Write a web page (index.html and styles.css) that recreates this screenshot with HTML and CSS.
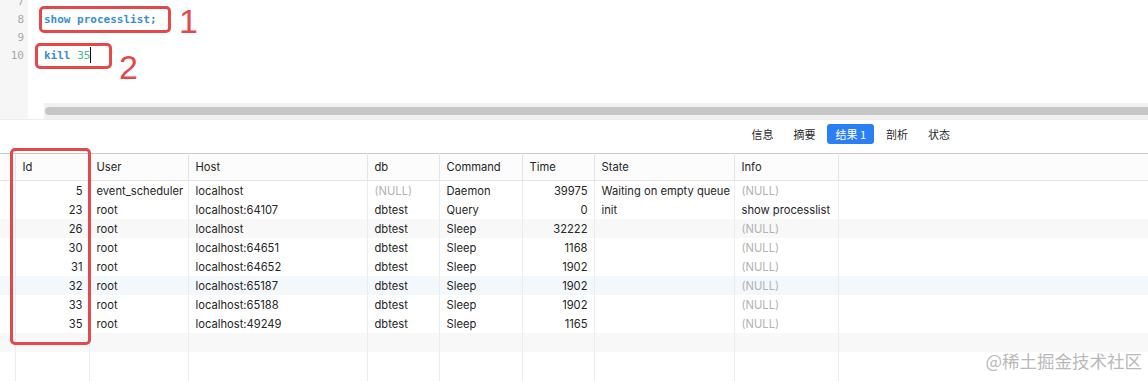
FILE: index.html
```html
<!DOCTYPE html>
<html lang="zh-CN">
<head>
  <meta charset="UTF-8" />
  <title>show processlist</title>
  <link rel="stylesheet" href="styles.css">
</head>
<body>
  <div class="page">
    <div class="editor">
      <div class="gutter">
        <div class="ln">7</div>
        <div class="ln">8</div>
        <div class="ln">9</div>
        <div class="ln">10</div>
      </div>
      <div class="code">
        <div class="lines">
          <div class="line"></div>
          <div class="line"><span class="kw">show processlist;</span></div>
          <div class="line"></div>
          <div class="line"><span class="kw">kill</span> <span class="num">35</span><span class="caret"></span></div>
        </div>
        <div class="hscroll"><div class="thumb"></div></div>
      </div>
    </div>

    <div class="tabs">
      <span class="tab">信息</span>
      <span class="tab">摘要</span>
      <span class="tab active">结果 1</span>
      <span class="tab">剖析</span>
      <span class="tab">状态</span>
    </div>

    <table class="grid">
      <colgroup>
        <col style="width: 15px">
        <col style="width: 74px">
        <col style="width: 99px">
        <col style="width: 179px">
        <col style="width: 72px">
        <col style="width: 83px">
        <col style="width: 72px">
        <col style="width: 140px">
        <col style="width: 104px">
        <col>
      </colgroup>
      <thead>
        <tr>
          <th class="pad"></th><th>Id</th><th>User</th><th>Host</th><th>db</th><th>Command</th><th>Time</th><th>State</th><th>Info</th><th class="rest"></th>
        </tr>
      </thead>
      <tbody>
        <tr><td class="pad"></td><td class="r">5</td><td>event_scheduler</td><td>localhost</td><td class="null">(NULL)</td><td>Daemon</td><td class="r">39975</td><td>Waiting on empty queue</td><td class="null">(NULL)</td><td class="rest"></td></tr>
        <tr><td class="pad"></td><td class="r">23</td><td>root</td><td>localhost:64107</td><td>dbtest</td><td>Query</td><td class="r">0</td><td>init</td><td>show processlist</td><td class="rest"></td></tr>
        <tr class="shade"><td class="pad"></td><td class="r">26</td><td>root</td><td>localhost</td><td>dbtest</td><td>Sleep</td><td class="r">32222</td><td></td><td class="null">(NULL)</td><td class="rest"></td></tr>
        <tr><td class="pad"></td><td class="r">30</td><td>root</td><td>localhost:64651</td><td>dbtest</td><td>Sleep</td><td class="r">1168</td><td></td><td class="null">(NULL)</td><td class="rest"></td></tr>
        <tr><td class="pad"></td><td class="r">31</td><td>root</td><td>localhost:64652</td><td>dbtest</td><td>Sleep</td><td class="r">1902</td><td></td><td class="null">(NULL)</td><td class="rest"></td></tr>
        <tr class="blue"><td class="pad"></td><td class="r">32</td><td>root</td><td>localhost:65187</td><td>dbtest</td><td>Sleep</td><td class="r">1902</td><td></td><td class="null">(NULL)</td><td class="rest"></td></tr>
        <tr><td class="pad"></td><td class="r">33</td><td>root</td><td>localhost:65188</td><td>dbtest</td><td>Sleep</td><td class="r">1902</td><td></td><td class="null">(NULL)</td><td class="rest"></td></tr>
        <tr><td class="pad"></td><td class="r">35</td><td>root</td><td>localhost:49249</td><td>dbtest</td><td>Sleep</td><td class="r">1165</td><td></td><td class="null">(NULL)</td><td class="rest"></td></tr>
        <tr class="shade"><td class="pad"></td><td></td><td></td><td></td><td></td><td></td><td></td><td></td><td></td><td class="rest"></td></tr>
        <tr class="filler"><td class="pad"></td><td></td><td></td><td></td><td></td><td></td><td></td><td></td><td></td><td class="rest"></td></tr>
      </tbody>
    </table>

    <!-- annotations drawn over the screenshot -->
    <div class="mark box1"></div>
    <div class="mark box2"></div>
    <div class="mark box3"></div>
    <span class="label label1">1</span>
    <span class="label label2">2</span>
    <span class="watermark">@稀土掘金技术社区</span>
  </div>
</body>
</html>
```

FILE: styles.css
```css
html, body {
  margin: 0;
  padding: 0;
  background: #fff;
}

body {
  font-family: Inter, "Liberation Sans", "Noto Sans CJK SC", sans-serif;
  color: #262626;
  overflow: hidden;
}

.page {
  position: relative;
  width: 1148px;
  height: 381px;
  overflow: hidden;
}

/* editor */
.editor {
  display: flex;
  height: 119px;
  border-bottom: 1px solid #ececec;
}

.gutter {
  width: 28px;
  background: #f6f6f6;
  margin-top: -7px;
  font-family: "DejaVu Sans Mono", monospace;
  font-size: 11px;
  color: #a8a8a8;
}

.ln {
  height: 18px;
  line-height: 18px;
  text-align: right;
  padding-right: 4px;
}

.code {
  flex: 1;
  display: flex;
  flex-direction: column;
  justify-content: space-between;
}

.lines {
  margin-top: -7px;
  padding-left: 16px;
  font-family: "DejaVu Sans Mono", monospace;
  font-size: 11px;
  font-weight: bold;
}

.line {
  height: 18px;
  line-height: 18px;
  white-space: pre;
}

.kw {
  color: #3a8ed6;
}

.num {
  color: #4dba8c;
  font-weight: normal;
}

.caret {
  display: inline-block;
  width: 1px;
  height: 16px;
  background: #111;
  vertical-align: -4px;
}

.hscroll {
  margin-left: 16px;
  height: 16px;
  background: #f1f1f1;
  display: flex;
  align-items: center;
}

.thumb {
  height: 8px;
  width: 100%;
  margin-left: 1px;
  background: #c6c6c6;
  border-radius: 4px 0 0 4px;
}

/* result tabs */
.tabs {
  display: flex;
  justify-content: flex-end;
  align-items: center;
  gap: 4px;
  height: 28px;
  padding-right: 190px;
  padding-bottom: 5px;
  font-size: 11px;
  color: #2a2a2a;
}

.tab {
  padding: 0 8px;
  height: 20px;
  line-height: 20px;
  border-radius: 3px;
  font-family: "Noto Sans CJK SC", sans-serif;
}

.tab.active {
  background: #2b7ff5;
  color: #fff;
}

/* result grid */
.grid {
  border-collapse: collapse;
  table-layout: fixed;
  width: 1148px;
  font-size: 11.2px;
  border-top: 1px solid #c9c9c9;
}

.grid th {
  height: 26px;
  background: #fcfcfc;
  font-weight: normal;
  text-align: left;
  padding: 0 7px;
  border-left: 1px solid #e4e4e4;
  border-bottom: 1px solid #e4e4e4;
  white-space: nowrap;
}

.grid td {
  height: 19px;
  padding: 0 7px;
  border-left: 1px solid #ececec;
  white-space: nowrap;
  overflow: hidden;
}

.grid .pad {
  border-left: none;
  padding: 0;
}

.grid .r {
  text-align: right;
  padding-right: 6px;
}

.grid .null {
  color: #b2b2b2;
}

.grid tr.shade td {
  background: #f8f8f8;
}

.grid tr.blue td {
  background: #f3f8fd;
}

.grid tr.filler td {
  height: 40px;
}

/* annotations */
.mark {
  position: absolute;
  border: 3px solid #e5484a;
  border-radius: 5px;
  box-sizing: border-box;
}

.box1 {
  left: 39px;
  top: 6px;
  width: 132px;
  height: 27px;
}

.box2 {
  left: 35px;
  top: 43px;
  width: 77px;
  height: 26px;
}

.box3 {
  left: 10px;
  top: 148px;
  width: 81px;
  height: 197px;
}

.label {
  position: absolute;
  font-family: "Liberation Sans", sans-serif;
  font-size: 34px;
  color: #e5484a;
  line-height: 1;
}

.label1 {
  left: 179px;
  top: 4px;
}

.label2 {
  left: 119px;
  top: 50px;
}

.watermark {
  position: absolute;
  right: 6px;
  bottom: 8px;
  font-family: "Noto Sans CJK SC", sans-serif;
  font-size: 17.5px;
  color: #b9b9b9;
}
```
